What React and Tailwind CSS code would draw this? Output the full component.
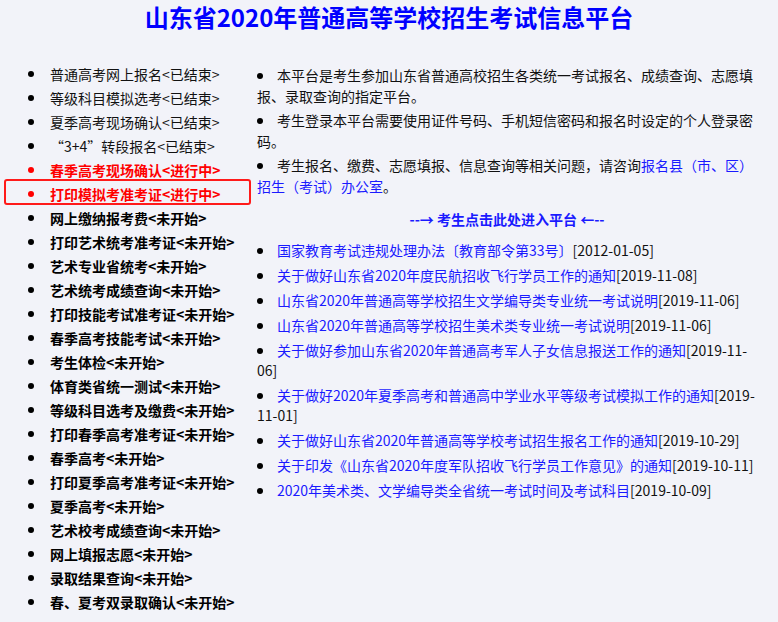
const leftItems = [
  { text: "普通高考网上报名<已结束>", kind: "done" },
  { text: "等级科目模拟选考<已结束>", kind: "done" },
  { text: "夏季高考现场确认<已结束>", kind: "done" },
  { text: "“3+4”转段报名<已结束>", kind: "done" },
  { text: "春季高考现场确认<进行中>", kind: "live" },
  { text: "打印模拟考准考证<进行中>", kind: "live", boxed: true },
  { text: "网上缴纳报考费<未开始>", kind: "todo" },
  { text: "打印艺术统考准考证<未开始>", kind: "todo" },
  { text: "艺术专业省统考<未开始>", kind: "todo" },
  { text: "艺术统考成绩查询<未开始>", kind: "todo" },
  { text: "打印技能考试准考证<未开始>", kind: "todo" },
  { text: "春季高考技能考试<未开始>", kind: "todo" },
  { text: "考生体检<未开始>", kind: "todo" },
  { text: "体育类省统一测试<未开始>", kind: "todo" },
  { text: "等级科目选考及缴费<未开始>", kind: "todo" },
  { text: "打印春季高考准考证<未开始>", kind: "todo" },
  { text: "春季高考<未开始>", kind: "todo" },
  { text: "打印夏季高考准考证<未开始>", kind: "todo" },
  { text: "夏季高考<未开始>", kind: "todo" },
  { text: "艺术校考成绩查询<未开始>", kind: "todo" },
  { text: "网上填报志愿<未开始>", kind: "todo" },
  { text: "录取结果查询<未开始>", kind: "todo" },
  { text: "春、夏考双录取确认<未开始>", kind: "todo" },
]

const news = [
  ["国家教育考试违规处理办法〔教育部令第33号〕", "[2012-01-05]"],
  ["关于做好山东省2020年度民航招收飞行学员工作的通知", "[2019-11-08]"],
  ["山东省2020年普通高等学校招生文学编导类专业统一考试说明", "[2019-11-06]"],
  ["山东省2020年普通高等学校招生美术类专业统一考试说明", "[2019-11-06]"],
  ["关于做好参加山东省2020年普通高考军人子女信息报送工作的通知", "[2019-11-06]"],
  ["关于做好2020年夏季高考和普通高中学业水平等级考试模拟工作的通知", "[2019-11-01]"],
  ["关于做好山东省2020年普通高等学校考试招生报名工作的通知", "[2019-10-29]"],
  ["关于印发《山东省2020年度军队招收飞行学员工作意见》的通知", "[2019-10-11]"],
  ["2020年美术类、文学编导类全省统一考试时间及考试科目", "[2019-10-09]"],
]

function Dot({ red }) {
  return <span className={`inline-block h-[6px] w-[6px] rounded-full ${red ? "bg-[#ff0000]" : "bg-black"}`} />
}

function LeftItem({ item }) {
  const color =
    item.kind === "live" ? "text-[#ff0000] font-bold" : item.kind === "todo" ? "text-black font-bold" : "text-[#111]"
  return (
    <li className="relative flex h-[24px] items-center">
      <span className="flex w-[50px] justify-center pl-[12px]">
        <Dot red={item.kind === "live"} />
      </span>
      <span className={`whitespace-nowrap ${color}`}>{item.text}</span>
      {item.boxed && (
        <span className="absolute left-[4px] top-[-3px] h-[26px] w-[247px] rounded-[3px] border-2 border-[#ff1a1a]" />
      )}
    </li>
  )
}

function Bullet() {
  return (
    <span className="inline-block h-[6px] w-[20px] align-[2px]">
      <span className="block h-[6px] w-[6px] rounded-full bg-black" />
    </span>
  )
}

export default function App() {
  return (
    <div
      className="min-h-screen bg-[#f2f3f9] text-[14px] text-[#111]"
      style={{ fontFamily: '"Noto Sans CJK SC", "Noto Sans", sans-serif' }}
    >
      <h1 className="flex h-[34px] items-center justify-center text-[24px] font-bold leading-none text-[#0000ff]">
        山东省2020年普通高等学校招生考试信息平台
      </h1>

      <div className="flex pt-[28px]">
        <ul className="w-[257px] shrink-0 leading-[20px]">
          {leftItems.map((item) => (
            <LeftItem key={item.text} item={item} />
          ))}
        </ul>

        <div className="w-[500px] pt-[3px]">
          <p className="mb-[3px] leading-[21px]">
            <Bullet />
            本平台是考生参加山东省普通高校招生各类统一考试报名、成绩查询、志愿填报、录取查询的指定平台。
          </p>
          <p className="mb-[3px] leading-[21px]">
            <Bullet />
            考生登录本平台需要使用证件号码、手机短信密码和报名时设定的个人登录密码。
          </p>
          <p className="leading-[21px]">
            <Bullet />
            考生报名、缴费、志愿填报、信息查询等相关问题，请咨询
            <a className="text-[#1a1aff]">报名县（市、区）招生（考试）办公室</a>。
          </p>

          <div className="mt-[12px] text-center font-bold leading-[21px] text-[#1a1aff]">
            --→ 考生点击此处进入平台 ←--
          </div>

          <ul className="mt-[10px]">
            {news.map(([title, date]) => (
              <li key={title} className="mb-[5px] leading-[20px]">
                <Bullet />
                <a className="text-[#1a1aff]">{title}</a>
                <span className="text-[#111]">{date}</span>
              </li>
            ))}
          </ul>
        </div>
      </div>
    </div>
  )
}
